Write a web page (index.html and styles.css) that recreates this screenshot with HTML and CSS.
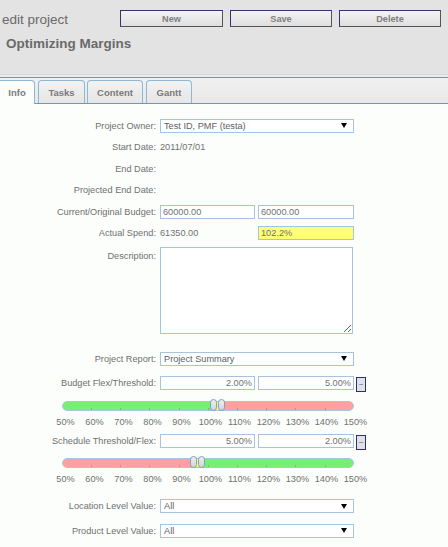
FILE: index.html
```html
<!DOCTYPE html>
<html>
<head>
<meta charset="utf-8">
<link rel="stylesheet" href="styles.css">
</head>
<body>
<div class="header">
  <div class="head-top">
    <div class="title">edit project</div>
    <div class="buttons">
      <button class="btn">New</button>
      <button class="btn">Save</button>
      <button class="btn">Delete</button>
    </div>
  </div>
  <div class="name">Optimizing Margins</div>
</div>
<div class="gap"></div>
<div class="tabbar">
  <div class="tab active">Info</div>
  <div class="tab tasks">Tasks</div>
  <div class="tab content-tab">Content</div>
  <div class="tab gantt">Gantt</div>
</div>
<div class="content">
  <div class="row">
    <div class="lbl">Project Owner:</div>
    <div class="select wide"><span>Test ID, PMF (testa)</span><svg class="arrow" width="6" height="5" viewBox="0 0 6 5"><path d="M0 0H6L3 5Z" fill="#000"/></svg></div>
  </div>
  <div class="row">
    <div class="lbl">Start Date:</div>
    <div class="val">2011/07/01</div>
  </div>
  <div class="row">
    <div class="lbl">End Date:</div>
  </div>
  <div class="row">
    <div class="lbl">Projected End Date:</div>
  </div>
  <div class="row">
    <div class="lbl">Current/Original Budget:</div>
    <input class="inp first" value="60000.00">
    <input class="inp second" value="60000.00">
  </div>
  <div class="row">
    <div class="lbl">Actual Spend:</div>
    <div class="val spend">61350.00</div>
    <input class="inp second yellow" value="102.2%">
  </div>
  <div class="row desc">
    <div class="lbl desc-lbl">Description:</div>
    <textarea class="ta"></textarea>
  </div>
  <div class="row report">
    <div class="lbl">Project Report:</div>
    <div class="select wide"><span>Project Summary</span><svg class="arrow" width="6" height="5" viewBox="0 0 6 5"><path d="M0 0H6L3 5Z" fill="#000"/></svg></div>
  </div>
  <div class="row flex1">
    <div class="lbl">Budget Flex/Threshold:</div>
    <input class="inp first right" value="2.00%">
    <input class="inp second right" value="5.00%">
    <div class="mini">~</div>
  </div>
  <div class="slider s1">
    <div class="ticks"></div>
    <div class="handle" style="left:147px"></div>
    <div class="handle" style="left:155px"></div>
  </div>
  <div class="scale">
    <span>50%</span><span>60%</span><span>70%</span><span>80%</span><span>90%</span><span>100%</span><span>110%</span><span>120%</span><span>130%</span><span>140%</span><span>150%</span>
  </div>
  <div class="row flex2">
    <div class="lbl">Schedule Threshold/Flex:</div>
    <input class="inp first right" value="5.00%">
    <input class="inp second right" value="2.00%">
    <div class="mini">–</div>
  </div>
  <div class="slider s2">
    <div class="ticks"></div>
    <div class="handle" style="left:127px"></div>
    <div class="handle" style="left:135px"></div>
  </div>
  <div class="scale">
    <span>50%</span><span>60%</span><span>70%</span><span>80%</span><span>90%</span><span>100%</span><span>110%</span><span>120%</span><span>130%</span><span>140%</span><span>150%</span>
  </div>
  <div class="row loc">
    <div class="lbl">Location Level Value:</div>
    <div class="select wide"><span>All</span><svg class="arrow" width="6" height="5" viewBox="0 0 6 5"><path d="M0 0H6L3 5Z" fill="#000"/></svg></div>
  </div>
  <div class="row prod">
    <div class="lbl">Product Level Value:</div>
    <div class="select wide"><span>All</span><svg class="arrow" width="6" height="5" viewBox="0 0 6 5"><path d="M0 0H6L3 5Z" fill="#000"/></svg></div>
  </div>
</div>
</body>
</html>
```
FILE: styles.css
```css
html, body {
  margin: 0;
  padding: 0;
}
body {
  width: 448px;
  height: 547px;
  overflow: hidden;
  background: #fbfefb;
  font-family: "Liberation Sans", Arial, sans-serif;
  color: #707070;
}
.header {
  background: #e3e3e3;
  border-bottom: 1px solid #c8dae8;
  box-sizing: border-box;
  height: 75px;
}
.head-top {
  display: flex;
  align-items: flex-start;
  padding-top: 10px;
  height: 28px;
  box-sizing: border-box;
}
.title {
  font-size: 13.5px;
  color: #6a6a6a;
  padding-left: 2px;
  width: 118px;
  line-height: 17px;
  margin-top: 1px;
}
.buttons {
  display: flex;
  gap: 7px;
}
.btn {
  width: 103px;
  height: 17px;
  margin: 0;
  padding: 0;
  font-family: "Liberation Sans", Arial, sans-serif;
  font-size: 9.2px;
  font-weight: bold;
  color: #808080;
  background: linear-gradient(#f4f4f4, #dedede);
  border: 1px solid;
  border-color: #3a3070 #555 #555 #3a3070;
}
.btn + .btn { width: 102px; }
.name {
  font-size: 13.5px;
  font-weight: bold;
  color: #6a6a6a;
  padding-left: 6px;
  margin-top: 8px;
  line-height: 16px;
}
.gap {
  height: 2px;
  background: #ebebeb;
}
.tabbar {
  height: 27px;
  box-sizing: border-box;
  border-top: 1px solid #5b9bd0;
  border-bottom: 1px solid #5b9bd0;
  background: linear-gradient(#f0f0f0, #e8e8e8);
  display: flex;
  align-items: flex-end;
  padding-top: 2px;
}
.tab {
  height: 23px;
  box-sizing: border-box;
  border: 1px solid #8cb8d6;
  border-bottom: none;
  border-radius: 4px 4px 0 0;
  font-size: 9.5px;
  font-weight: bold;
  color: #7a7a7a;
  display: flex;
  align-items: center;
  justify-content: center;
  background: linear-gradient(#f2f2f2, #e6e6e6);
}
.tab.active {
  width: 35px;
  background: #fbfefb;
  height: 24px;
  margin-bottom: -1px;
  border-left: none;
  border-radius: 0 4px 0 0;
}
.tab.tasks { width: 47px; margin-left: 3px; }
.tab.content-tab { width: 56px; margin-left: 2px; }
.tab.gantt { width: 46px; margin-left: 3px; }
.content {
  padding-top: 11px;
  font-size: 9.2px;
}
.row {
  display: flex;
  align-items: center;
  height: 21.5px;
}
.lbl {
  width: 156px;
  text-align: right;
  flex: none;
  margin-right: 4px;
  color: #707070;
}
.val { color: #707070; }
.spend { width: 98px; }
.select {
  height: 14px;
  box-sizing: border-box;
  border: 1px solid #a6c4e0;
  background: #fff;
  display: flex;
  align-items: center;
  justify-content: space-between;
  padding: 0 6px 0 3px;
  color: #606060;
}
.select.wide { width: 194px; }
.arrow { display: block; }
.inp {
  height: 14px;
  box-sizing: border-box;
  border: 1px solid #a6c4e0;
  background: #fff;
  font-family: "Liberation Sans", Arial, sans-serif;
  font-size: 9.2px;
  color: #707070;
  padding: 0 2px;
  margin: 0;
  outline: none;
}
.inp.first { width: 95px; margin-right: 3px; }
.inp.second { width: 96px; }
.inp.right { text-align: right; }
.inp.yellow { background: #ffff77; }
.row.desc {
  height: auto;
  align-items: flex-start;
  margin-top: 3px;
}
.desc-lbl { padding-top: 4px; }
.ta {
  width: 193px;
  height: 87px;
  box-sizing: border-box;
  border: 1px solid #a6c4e0;
  background: #fff;
  margin: 0;
  padding: 0;
  resize: both;
}
.row.report { margin-top: 14px; }
.row.flex1 { margin-top: 3px; }
.mini {
  width: 10px;
  height: 15px;
  box-sizing: border-box;
  border: 1px solid #303060;
  background: #e0e0e8;
  margin-left: 2px;
  margin-top: 3px;
  font-size: 8px;
  color: #555;
  display: flex;
  align-items: center;
  justify-content: center;
  line-height: 1;
}
.slider {
  position: relative;
  margin-left: 62px;
  width: 292px;
  height: 10px;
  box-sizing: border-box;
  border: 1px solid #a8c6de;
  border-radius: 5px;
}
.s1 {
  margin-top: 7px;
  background: linear-gradient(to right, #74f074 0 150px, #ffff55 150px 156px, #ffa0a0 156px);
}
.s2 {
  margin-top: 6px;
  background: linear-gradient(to right, #ffa0a0 0 130px, #ffff55 130px 136px, #74f074 136px);
}
.ticks {
  position: absolute;
  left: 28px;
  right: 0;
  bottom: 0;
  height: 2px;
  background: repeating-linear-gradient(to right, #888 0 1px, transparent 1px 29.2px);
  opacity: 0.6;
}
.handle {
  position: absolute;
  top: -3px;
  width: 7px;
  height: 12px;
  box-sizing: border-box;
  border: 1px solid #7aa2c4;
  border-radius: 4px;
  background: linear-gradient(#eeeeee, #d4d4d4);
}
.scale {
  display: flex;
  margin-left: 51px;
  margin-top: 5px;
  height: 12px;
  line-height: 12px;
  font-size: 9.2px;
  color: #707070;
}
.scale span {
  width: 29px;
  text-align: center;
  flex: none;
}
.row.flex2 { margin-top: 2px; }
.row.loc { margin-top: 11px; }
.row.prod { margin-top: 3px; }
```
